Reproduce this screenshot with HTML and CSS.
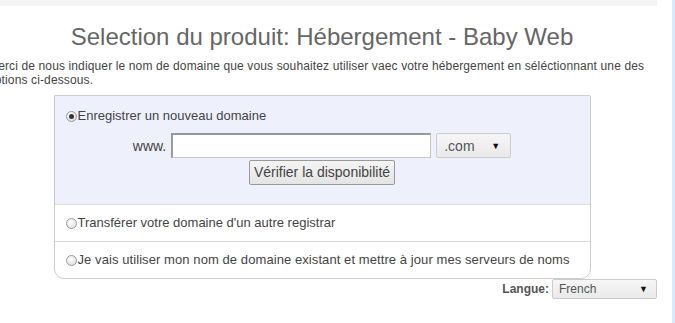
FILE: index.html
```html
<!DOCTYPE html>
<html lang="fr">
<head>
<meta charset="utf-8">
<title>Selection du produit</title>
<link rel="stylesheet" href="styles.css">
</head>
<body>
<div class="page">
  <div class="main">
    <div class="topbar"></div>
    <div class="content">
      <h1 class="title">Selection du produit: Hébergement - Baby Web</h1>
      <p class="intro">Merci de nous indiquer le nom de domaine que vous souhaitez utiliser vaec votre hébergement en séléctionnant une des options ci-dessous.</p>
      <div class="box">
        <div class="opt opt-active">
          <label class="optlabel"><span class="radio checked"></span>Enregistrer un nouveau domaine</label>
          <div class="domrow">
            <span class="www">www.</span>
            <span class="textinput"></span>
            <span class="select tld">.com<span class="arrow">▼</span></span>
          </div>
          <div class="btnrow"><span class="btn">Vérifier la disponibilité</span></div>
        </div>
        <div class="opt">
          <label class="optlabel"><span class="radio"></span>Transférer votre domaine d'un autre registrar</label>
        </div>
        <div class="opt">
          <label class="optlabel wide"><span class="radio"></span>Je vais utiliser mon nom de domaine existant et mettre à jour mes serveurs de noms</label>
        </div>
      </div>
      <div class="langrow">
        <span class="langlabel">Langue:</span>
        <span class="select lang">French<span class="arrow">▼</span></span>
      </div>
    </div>
  </div>
  <div class="edge"></div>
</div>
</body>
</html>
```
FILE: styles.css
```css
html, body {
  margin: 0;
  padding: 0;
  background: #fff;
  overflow: hidden;
}
body {
  font-family: "Liberation Sans", Arial, sans-serif;
  width: 675px;
  height: 323px;
}
.page {
  display: flex;
  height: 323px;
}
.main {
  width: 672px;
  flex: none;
}
.edge {
  width: 3px;
  background: #dce8fb;
}
.topbar {
  width: 657px;
  height: 6px;
  background: #f3f3f3;
}
.content {
  margin-left: -13px;
  width: 670px;
}
.title {
  margin: 17px 0 0;
  font-size: 24px;
  font-weight: normal;
  color: #666;
  text-align: center;
  line-height: 28px;
}
.intro {
  margin: 8px 0 0;
  padding-left: 1px;
  font-size: 12px;
  line-height: 14px;
  letter-spacing: 0.13px;
  color: #444;
}
.box {
  margin: 8px auto 0;
  width: 535px;
  border: 1px solid #ccc;
  border-radius: 0 2px 10px 10px;
  color: #444;
  font-size: 13px;
}
.opt {
  padding: 10px 11px;
  border-top: 1px solid #ddd;
}
.opt:first-child {
  border-top: none;
}
.opt-active {
  background: #eef1fc;
  padding: 12px 11px 19px;
}
.optlabel {
  display: flex;
  align-items: center;
  line-height: 16px;
  white-space: nowrap;
}
.optlabel.wide {
  letter-spacing: 0.08px;
}
.radio {
  width: 9px;
  height: 9px;
  border-radius: 50%;
  border: 1px solid #999;
  background: radial-gradient(circle at 40% 35%, #fff, #d8d8d8);
  margin-right: 1px;
  flex: none;
  position: relative;
}
.radio.checked::after {
  content: "";
  position: absolute;
  left: 2px;
  top: 2px;
  width: 5px;
  height: 5px;
  border-radius: 50%;
  background: #333;
}
.domrow {
  display: flex;
  justify-content: center;
  align-items: center;
  margin-top: 9px;
  gap: 5px;
}
.www {
  font-size: 14px;
}
.textinput {
  box-sizing: border-box;
  width: 260px;
  height: 25px;
  background: #fff;
  border: 1px solid #c8c8c8;
  border-top: 2px solid #9a9a9a;
  border-left: 2px solid #9a9a9a;
}
.select {
  display: flex;
  justify-content: space-between;
  align-items: center;
  box-sizing: border-box;
  border: 1px solid #ccc;
  border-radius: 2px;
  background: linear-gradient(#f6f6f6, #e9e9e9);
  color: #555;
}
.tld {
  width: 75px;
  height: 25px;
  padding: 0 10px 0 7px;
  font-size: 14px;
}
.arrow {
  font-size: 9px;
  color: #111;
}
.btnrow {
  display: flex;
  justify-content: center;
  margin-top: 2px;
}
.btn {
  display: inline-block;
  border: 1px solid #999;
  border-radius: 2px;
  background: linear-gradient(#f4f4f4, #e4e4e4);
  padding: 3px 4px;
  font-size: 14px;
  color: #444;
  line-height: 17px;
}
.langrow {
  display: flex;
  justify-content: flex-end;
  align-items: center;
  gap: 3px;
  margin-top: 0;
}
.langlabel {
  font-weight: bold;
  font-size: 12px;
  color: #555;
}
.lang {
  width: 105px;
  height: 20px;
  padding: 0 8px 0 6px;
  font-size: 12px;
}
```
